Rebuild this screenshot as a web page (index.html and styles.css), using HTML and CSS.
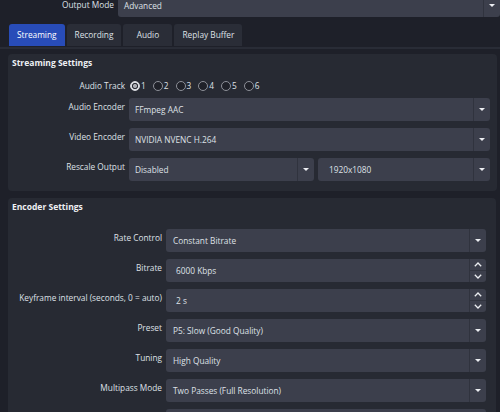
FILE: index.html
```html
<!DOCTYPE html>
<html lang="en">
<head>
    <meta charset="UTF-8">
    <meta name="viewport" content="width=device-width, initial-scale=1.0">
    <title>Settings - Output</title>
    <link rel="stylesheet" href="styles.css">
</head>
<body>
    <!-- Output mode -->
    <div class="top-row">
        <span class="label">Output Mode</span>
        <div class="combo top-combo"><span class="value">Advanced</span><span class="drop"><i class="arrow"></i></span></div>
    </div>

    <!-- Tabs -->
    <div class="tabs">
        <div class="tab active">Streaming</div>
        <div class="tab">Recording</div>
        <div class="tab">Audio</div>
        <div class="tab">Replay Buffer</div>
    </div>

    <div class="pane">
        <!-- Streaming settings -->
        <section class="group streaming">
            <h2>Streaming Settings</h2>

            <div class="row radio-row">
                <span class="label">Audio Track</span>
                <div class="radios">
                    <span class="radio-item"><i class="radio on"></i>1</span>
                    <span class="radio-item"><i class="radio"></i>2</span>
                    <span class="radio-item"><i class="radio"></i>3</span>
                    <span class="radio-item"><i class="radio"></i>4</span>
                    <span class="radio-item"><i class="radio"></i>5</span>
                    <span class="radio-item"><i class="radio"></i>6</span>
                </div>
            </div>

            <div class="row">
                <span class="label">Audio Encoder</span>
                <div class="combo"><span class="value">FFmpeg AAC</span><span class="drop"><i class="arrow"></i></span></div>
            </div>

            <div class="row">
                <span class="label">Video Encoder</span>
                <div class="combo"><span class="value">NVIDIA NVENC H.264</span><span class="drop"><i class="arrow"></i></span></div>
            </div>

            <div class="row">
                <span class="label">Rescale Output</span>
                <div class="pair">
                    <div class="combo rescale"><span class="value">Disabled</span><span class="drop"><i class="arrow"></i></span></div>
                    <div class="combo editable"><span class="value">1920x1080</span><span class="drop"><i class="arrow"></i></span></div>
                </div>
            </div>
        </section>

        <!-- Encoder settings -->
        <section class="group encoder">
            <h2>Encoder Settings</h2>

            <div class="row">
                <span class="label">Rate Control</span>
                <div class="combo"><span class="value">Constant Bitrate</span><span class="drop"><i class="arrow"></i></span></div>
            </div>

            <div class="row">
                <span class="label">Bitrate</span>
                <div class="combo spin">
                    <span class="value">6000 Kbps</span>
                    <span class="spin-btns">
                        <span class="half"><svg width="8" height="5" viewBox="0 0 8 5"><polyline points="0.8,4.2 4,1 7.2,4.2" /></svg></span>
                        <span class="half"><svg width="8" height="5" viewBox="0 0 8 5"><polyline points="0.8,0.8 4,4 7.2,0.8" /></svg></span>
                    </span>
                </div>
            </div>

            <div class="row">
                <span class="label">Keyframe interval (seconds, 0 = auto)</span>
                <div class="combo spin">
                    <span class="value">2 s</span>
                    <span class="spin-btns">
                        <span class="half"><svg width="8" height="5" viewBox="0 0 8 5"><polyline points="0.8,4.2 4,1 7.2,4.2" /></svg></span>
                        <span class="half"><svg width="8" height="5" viewBox="0 0 8 5"><polyline points="0.8,0.8 4,4 7.2,0.8" /></svg></span>
                    </span>
                </div>
            </div>

            <div class="row">
                <span class="label">Preset</span>
                <div class="combo"><span class="value">P5: Slow (Good Quality)</span><span class="drop"><i class="arrow"></i></span></div>
            </div>

            <div class="row">
                <span class="label">Tuning</span>
                <div class="combo"><span class="value">High Quality</span><span class="drop"><i class="arrow"></i></span></div>
            </div>

            <div class="row">
                <span class="label">Multipass Mode</span>
                <div class="combo"><span class="value">Two Passes (Full Resolution)</span><span class="drop"><i class="arrow"></i></span></div>
            </div>

            <!-- next row, only its top edge is in view -->
            <div class="row">
                <span class="label"></span>
                <div class="combo"></div>
            </div>
        </section>
    </div>
</body>
</html>
```

FILE: styles.css
```css
/* General Reset */
* {
    margin: 0;
    padding: 0;
    box-sizing: border-box;
}

body {
    font-family: 'Open Sans', 'Noto Sans', sans-serif;
    font-size: 8.3px;
    background: #1e2029;
    color: #dfe1e7;
    width: 500px;
    height: 412px;
    overflow: hidden;
}

/* Output mode row */
.top-row {
    display: flex;
    gap: 4px;
    height: 23px;
    margin-top: -6px;
}

.top-row .label {
    width: 125px;
    text-align: right;
    padding-top: 5px;
    line-height: 12px;
}

.top-row .top-combo {
    width: 382px;
    flex: none;
}

/* Tabs */
.tabs {
    display: flex;
    gap: 2px;
    margin-top: 7px;
    padding-left: 9px;
    height: 22px;
}

.tab {
    min-width: 49px;
    padding: 0 8px;
    line-height: 22px;
    text-align: center;
    background: #2a2d37;
    border-radius: 3px 3px 0 0;
}

.tab.active {
    background: #284cb8;
    color: #fff;
}

.pane {
    margin-top: 1px;
    border-top: 2px solid #292c36;
    padding-top: 5px;
}

/* Group boxes */
.group {
    margin-left: 8px;
    background: #272a33;
    border-radius: 4px;
}

.group h2 {
    font-size: 8.5px;
    font-weight: bold;
    line-height: 12px;
    color: #eef0f4;
}

.streaming {
    width: 489px;
    padding: 3px 7px 10px 4px;
}

.encoder {
    width: 488px;
    margin-top: 7px;
    padding: 3px 10px 10px 4px;
}

.row {
    display: flex;
    gap: 4px;
    height: 23px;
    margin-top: 7px;
}

.row .label {
    flex: none;
    text-align: right;
    padding-top: 3px;
    line-height: 12px;
    white-space: nowrap;
}

.streaming .label {
    width: 113px;
}

.encoder .label {
    width: 150px;
}

.streaming h2 + .row {
    margin-top: 9px;
}

.encoder h2 + .row {
    margin-top: 16px;
}

/* Audio track radios */
.radio-row {
    height: 16px;
}

.radio-row + .row {
    margin-top: 4px;
}

.radio-row .label {
    padding-top: 2px;
}

.radios {
    display: flex;
    align-items: center;
    gap: 7px;
    padding-left: 1px;
}

.radio-item {
    display: flex;
    align-items: center;
    gap: 1px;
    line-height: 16px;
}

.radio {
    width: 10px;
    height: 10px;
    border-radius: 50%;
    border: 1px solid #8d9098;
    background: #1f2129;
}

.radio.on {
    border-color: #d9dbe0;
    background: radial-gradient(circle, #a9abb2 0 1.8px, #2b2d35 2.3px 2.8px, #d9dbe0 3.3px);
}

/* Combo boxes */
.combo {
    flex: 1;
    display: flex;
    align-items: center;
    height: 23px;
    background: #3c3f4c;
    border-radius: 3px;
    overflow: hidden;
}

.combo .value {
    flex: 1;
    padding-left: 6px;
    white-space: nowrap;
    overflow: hidden;
}

.encoder .combo .value {
    padding-left: 7px;
}

.encoder .spin .value {
    padding-left: 10px;
}

.combo.editable .value {
    padding-left: 11px;
}

.drop {
    flex: none;
    width: 17px;
    height: 100%;
    border-left: 1px solid #30333e;
    display: flex;
    align-items: center;
    justify-content: center;
}

.arrow {
    width: 0;
    height: 0;
    border-left: 3px solid transparent;
    border-right: 3px solid transparent;
    border-top: 3px solid #eceef2;
}

.pair {
    flex: 1;
    display: flex;
    gap: 4px;
}

.combo.rescale {
    flex: none;
    width: 185px;
}

/* Spin boxes */
.spin-btns {
    flex: none;
    width: 17px;
    height: 100%;
    border-left: 1px solid #30333e;
    display: flex;
    flex-direction: column;
}

.spin-btns .half {
    flex: 1;
    display: flex;
    align-items: center;
    justify-content: center;
}

.spin-btns .half + .half {
    border-top: 1px solid #30333e;
}

.spin-btns polyline {
    fill: none;
    stroke: #eceef2;
    stroke-width: 1.3;
}
```
